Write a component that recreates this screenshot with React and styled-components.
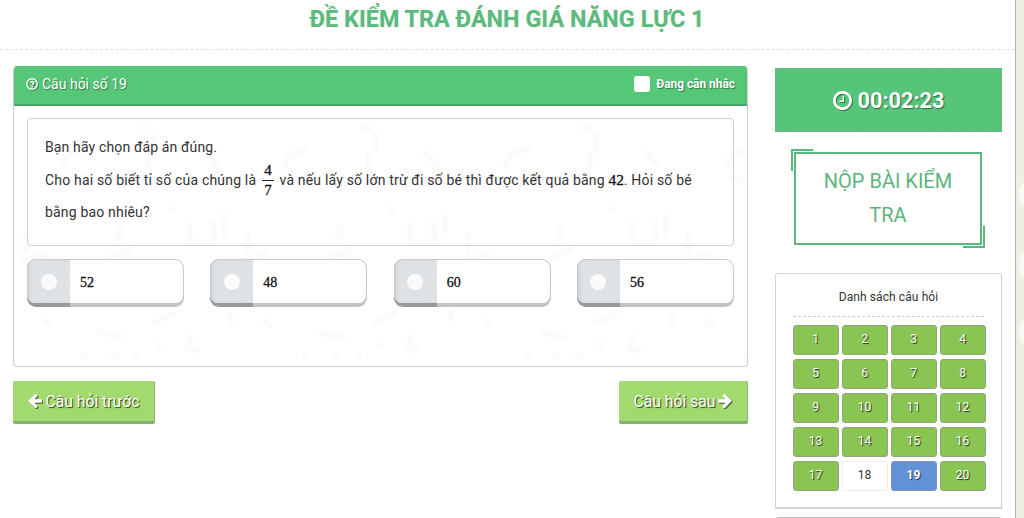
import React, { useState } from 'react';
import styled, { createGlobalStyle, css } from 'styled-components';

const GlobalStyle = createGlobalStyle`
  * { box-sizing: border-box; }
  body {
    margin: 0;
    height: 518px;
    overflow: hidden;
    background:
      radial-gradient(ellipse 6px 14px at 1024px 195px, #fafaf7 70%, transparent),
      radial-gradient(ellipse 6px 14px at 1024px 265px, #fafaf7 70%, transparent),
      radial-gradient(ellipse 6px 14px at 1024px 332px, #fafaf7 70%, transparent),
      #efefe6;
    font-family: Roboto, "Liberation Sans", sans-serif;
    font-size: 14px;
    color: #333;
  }
  button { font-family: inherit; cursor: pointer; }
`;

// --- Layout ---
const Page = styled.div`
  width: 1016px;
  height: 518px;
  overflow: hidden;
  background: #fff;
  border-right: 1px solid #b4b4ac;
`;

const PageHeader = styled.header`
  height: 50px;
  border-bottom: 1px dashed #e0e0e0;
  text-align: center;
`;

const PageTitle = styled.h1`
  margin: 0;
  padding-right: 1px;
  font-size: 23.4px;
  line-height: 39px;
  font-weight: 700;
  color: #5cba7d;
  text-shadow: 0 0 1px rgba(92, 186, 125, 0.4);
`;

const Content = styled.div`
  display: flex;
  align-items: flex-start;
  gap: 27px;
  padding: 16px 0 0 13px;
`;

const Main = styled.main`
  width: 735px;
`;

const Aside = styled.aside`
  width: 227px;
  padding-top: 2px;
`;

// --- Question panel ---
const Panel = styled.section`
  height: 301px;
  border: 1px solid #cfcfcf;
  border-top-color: #56c679;
  border-radius: 4px;
  overflow: hidden;
  position: relative;
`;

const Doodles = styled.svg`
  position: absolute;
  inset: 38px 0 0 0;
  width: 100%;
  height: 262px;
  pointer-events: none;
`;

const PanelHeader = styled.div`
  display: flex;
  align-items: center;
  justify-content: space-between;
  height: 40px;
  margin: -1px -1px 0;
  padding: 0 13px 2px;
  background: #56c679;
  border-bottom: 2px solid #47a566;
  color: #fff;
  text-shadow: 1px 1px 1px rgba(0, 0, 0, 0.4);
`;

const PanelTitle = styled.div`
  display: flex;
  align-items: center;
  gap: 4px;
  font-size: 14px;

  svg { filter: drop-shadow(1px 1px 0.5px rgba(0, 0, 0, 0.3)); }
`;

const ConsiderLabel = styled.label`
  display: flex;
  align-items: center;
  gap: 6px;
  font-size: 11.9px;
  font-weight: 700;
`;

const CheckBoxMark = styled.span`
  width: 16px;
  height: 16px;
  border-radius: 3px;
  background: #fff;
`;

const QuestionBox = styled.div`
  height: 128px;
  margin: 12px 13px 13px;
  padding: 12px 17px 0;
  border: 1px solid #cfcfcf;
  border-radius: 4px;
  line-height: 32px;
  font-size: 14px;
  letter-spacing: 0.14px;
  position: relative;

  p { margin: 0; }
  p + p {
    margin-top: 1px;
    letter-spacing: 0.18px;
  }
`;

const MathText = styled.span`
  font-family: "Liberation Serif", serif;
  font-size: 15.4px;
  line-height: 1;
  letter-spacing: 0;
  color: #111;
  -webkit-text-stroke: 0.3px #111;
`;

const Fraction = styled(MathText)`
  display: inline-flex;
  flex-direction: column;
  vertical-align: middle;
  width: 12px;
  margin: -6px 2px -6px 2px;
  text-align: center;
  font-size: 15px;
  transform: translateY(-1px);

  span { line-height: 19px; }
  span + span { border-top: 1px solid #222; }
`;

const Answers = styled.div`
  display: flex;
  justify-content: space-between;
  padding: 0 13px;
  position: relative;
`;

const AnswerCell = styled.div`
  display: flex;
  padding-bottom: 4px;
  border-radius: 9px;
  background: linear-gradient(90deg, #999 43px, #c4c4c4 43px);
  overflow: hidden;
`;

const Answer = styled.button`
  display: flex;
  width: 157px;
  height: 44px;
  padding: 0;
  border: 1px solid #c9c9c9;
  border-bottom: 0;
  border-radius: 9px 9px 8px 8px;
  background: #fff;
  overflow: hidden;
`;

const AnswerMark = styled.span`
  display: flex;
  align-items: center;
  justify-content: center;
  width: 43px;
  height: 43px;
  margin-left: -1px;
  flex: none;
  background: repeating-linear-gradient(45deg, #dcdfe1 0 1px, #e1e4e6 1px 3px);
  box-shadow: inset 3px 0 5px -2px #bfbfbf;

  &::before {
    content: '';
    width: 16px;
    height: 16px;
    border-radius: 50%;
    background: #fafafa;
  }
`;

const AnswerText = styled(MathText)`
  padding: 15px 0 0 10px;
  line-height: 16px;
  font-size: 14px;
`;

const NavRow = styled.div`
  display: flex;
  justify-content: space-between;
  margin-top: 14px;
`;

const NavButton = styled.button`
  display: flex;
  align-items: center;
  justify-content: center;
  gap: ${({ $gap }) => $gap}px;
  width: ${({ $width }) => $width}px;
  height: 43px;
  padding: 0;
  border: 0;
  border-right: 1px solid #86b870;
  border-bottom: 3px solid #7db569;
  border-radius: 2px;
  background: #a3da70;
  color: #fff;
  font-size: 15.7px;
  text-shadow: 1px 1px 1px rgba(0, 0, 0, 0.75);

  svg { filter: drop-shadow(1px 1px 0.5px rgba(0, 0, 0, 0.6)); }
`;

// --- Sidebar ---
const Timer = styled.div`
  display: flex;
  align-items: center;
  justify-content: center;
  gap: 6px;
  height: 64px;
  border: 1px solid #63b880;
  background: repeating-linear-gradient(45deg, #54c377 0 1px, #57c57a 1px 3px);
  color: #fff;
  font-size: 21.7px;
  font-weight: 700;
  text-shadow: 1px 1px 1px rgba(0, 0, 0, 0.45);

  svg { filter: drop-shadow(1px 1px 0.5px rgba(0, 0, 0, 0.4)); }
`;

const corner = css`
  content: '';
  position: absolute;
  width: 20px;
  height: 20px;
`;

const SubmitButton = styled.button`
  display: block;
  position: relative;
  width: 188px;
  height: 93px;
  margin: 20px 0 28px 19px;
  padding: 0 20px 1px;
  border: 2px solid #5ab780;
  background: #fff;
  color: #5cb47c;
  font-size: 20px;
  line-height: 34px;

  &::before {
    ${corner}
    top: -5px;
    left: -5px;
    border-top: 2px solid #5ab780;
    border-left: 2px solid #5ab780;
  }

  &::after {
    ${corner}
    right: -5px;
    bottom: -5px;
    border-right: 2px solid #5ab780;
    border-bottom: 2px solid #5ab780;
  }
`;

const ListPanel = styled.section`
  height: 236px;
  padding: 0 17px;
  border: 1px solid #d4d4d4;
  border-bottom-width: 2px;
  border-radius: 3px 3px 0 0;
`;

const ListTitle = styled.div`
  height: 43px;
  line-height: 46px;
  border-bottom: 1px dashed #ccc;
  font-size: 12px;
  letter-spacing: 0.1px;
  text-align: center;
`;

const QuestionGrid = styled.div`
  display: grid;
  grid-template-columns: repeat(4, 46px);
  grid-auto-rows: 30px;
  gap: 4px 3px;
  padding-top: 8px;
`;

const variants = {
  done: css`
    border: 1px solid #8fa67c;
    background: #8ac554;
    color: #fff;
    text-shadow: 1px 1px 1px rgba(0, 0, 0, 0.8);
  `,
  empty: css`
    border: 1px solid #eee;
    background: #fff;
    color: #333;
  `,
  current: css`
    border: 1px solid #7d93b8;
    background: #6291d8;
    color: #fff;
    font-weight: 700;
    text-shadow: 1px 1px 1px rgba(0, 0, 0, 0.6);
  `,
};

const QuestionCell = styled.button`
  padding: 0 1px 2px 0;
  border-radius: 3px;
  font-size: 12px;
  ${({ $status }) => variants[$status]}
`;

const NextPanel = styled.div`
  height: 20px;
  margin-top: 8px;
  border: 1px solid #bbb;
  border-radius: 3px;
`;

// --- Icons ---
const QuestionIcon = () => (
  <svg width="12" height="12" viewBox="0 0 24 24" fill="none" stroke="currentColor">
    <circle cx="12" cy="12" r="10.400" strokeWidth="2.800" />
    <path d="M8.300 9.600C9.300 6.100 15.500 6.400 15.300 9.700C15.200 11.700 12.200 11.900 12.200 14.600" strokeWidth="3" />
    <path d="M12.200 15.900v2.900" strokeWidth="3" />
  </svg>
);

const ClockIcon = () => (
  <svg width="19" height="19" viewBox="0 128 1536 1536" fill="currentColor">
    <path d="M896 544v448q0 14-9 23t-23 9h-320q-14 0-23-9t-9-23v-64q0-14 9-23t23-9h224v-352q0-14 9-23t23-9h64q14 0 23 9t9 23zm416 352q0-148-73-273t-198-198-273-73-273 73-198 198-73 273 73 273 198 198 273 73 273-73 198-198 73-273zm224 0q0 209-103 385.500t-279.500 279.500-385.500 103-385.500-103-279.500-279.500-103-385.500 103-385.500 279.500-279.500 385.500-103 385.500 103 279.500 279.500 103 385.500z" />
  </svg>
);

const ArrowIcon = ({ right = false }) => (
  <svg width="14" height="14" viewBox="0 192 1536 1536" fill="currentColor">
    <path
      transform={right ? 'matrix(-1 0 0 1 1536 0)' : undefined}
      d="M1536 896v128q0 53-32.500 90.500t-84.500 37.500h-704l293 294q38 36 38 90t-38 90l-75 76q-37 37-90 37-52 0-91-37l-651-652q-37-37-37-90 0-52 37-91l651-650q38-38 91-38 52 0 90 38l75 74q38 38 38 91t-38 91l-293 293h704q52 0 84.500 37.500t32.500 90.500z"
    />
  </svg>
);

// Faint scribbles repeated behind the question
const DoodlePattern = () => (
  <Doodles>
    <defs>
      <pattern id="doodles" x="0" y="0" width="221" height="262" patternUnits="userSpaceOnUse">
        <g fill="none" stroke="#fbfbfb" strokeWidth="6" strokeLinecap="round">
          <path d="M140 30v15M128 22l5 2M50 60q0-12 22-16M53 72q10 6 18-2M134 50v10M190 48l12 12" />
          <path d="M176 120q-6 18 12 18t10-20M12 130v16M104 122q6 4-2 12M156 104l2 1M210 112v18M9 156l22-7M95 153l20-8" />
          <path d="M140 218l20-10M86 228l22 4M144 240l2 1M177 232q-10 15 6 13M216 206v12M30 216l5 4M70 252h2M100 252h2M122 252h2" />
        </g>
      </pattern>
    </defs>
    <rect width="100%" height="100%" fill="url(#doodles)" />
  </Doodles>
);

const answers = [52, 48, 60, 56];
const questions = Array.from({ length: 20 }, (_, i) => i + 1);

const getStatus = (number, current) => {
  if (number === current) return 'current';
  return number === 18 ? 'empty' : 'done';
};

function App() {
  const [current, setCurrent] = useState(19);

  return (
    <>
      <GlobalStyle />
      <Page>
        <PageHeader>
          <PageTitle>ĐỀ KIỂM TRA ĐÁNH GIÁ NĂNG LỰC 1</PageTitle>
        </PageHeader>
        <Content>
          <Main>
            <Panel>
              <DoodlePattern />
              <PanelHeader>
                <PanelTitle>
                  <QuestionIcon />
                  Câu hỏi số {current}
                </PanelTitle>
                <ConsiderLabel>
                  <CheckBoxMark />
                  Đang cân nhắc
                </ConsiderLabel>
              </PanelHeader>
              <QuestionBox>
                <p>Bạn hãy chọn đáp án đúng.</p>
                <p>
                  Cho hai số biết tỉ số của chúng là{' '}
                  <Fraction>
                    <span>4</span>
                    <span>7</span>
                  </Fraction>{' '}
                  và nếu lấy số lớn trừ đi số bé thì được kết quả bằng <MathText>42</MathText>. Hỏi số bé
                  bằng bao nhiêu?
                </p>
              </QuestionBox>
              <Answers>
                {answers.map((value) => (
                  <AnswerCell key={value}>
                    <Answer>
                      <AnswerMark />
                      <AnswerText>{value}</AnswerText>
                    </Answer>
                  </AnswerCell>
                ))}
              </Answers>
            </Panel>
            <NavRow>
              <NavButton $width={142} $gap={4} onClick={() => setCurrent(Math.max(1, current - 1))}>
                <ArrowIcon /> Câu hỏi trước
              </NavButton>
              <NavButton $width={129} $gap={3} onClick={() => setCurrent(Math.min(20, current + 1))}>
                Câu hỏi sau <ArrowIcon right />
              </NavButton>
            </NavRow>
          </Main>

          <Aside>
            <Timer>
              <ClockIcon /> 00:02:23
            </Timer>
            <SubmitButton>NỘP BÀI KIỂM TRA</SubmitButton>
            <ListPanel>
              <ListTitle>Danh sách câu hỏi</ListTitle>
              <QuestionGrid>
                {questions.map((number) => (
                  <QuestionCell
                    key={number}
                    $status={getStatus(number, current)}
                    onClick={() => setCurrent(number)}
                  >
                    {number}
                  </QuestionCell>
                ))}
              </QuestionGrid>
            </ListPanel>
            <NextPanel />
          </Aside>
        </Content>
      </Page>
    </>
  );
}

export default App;
